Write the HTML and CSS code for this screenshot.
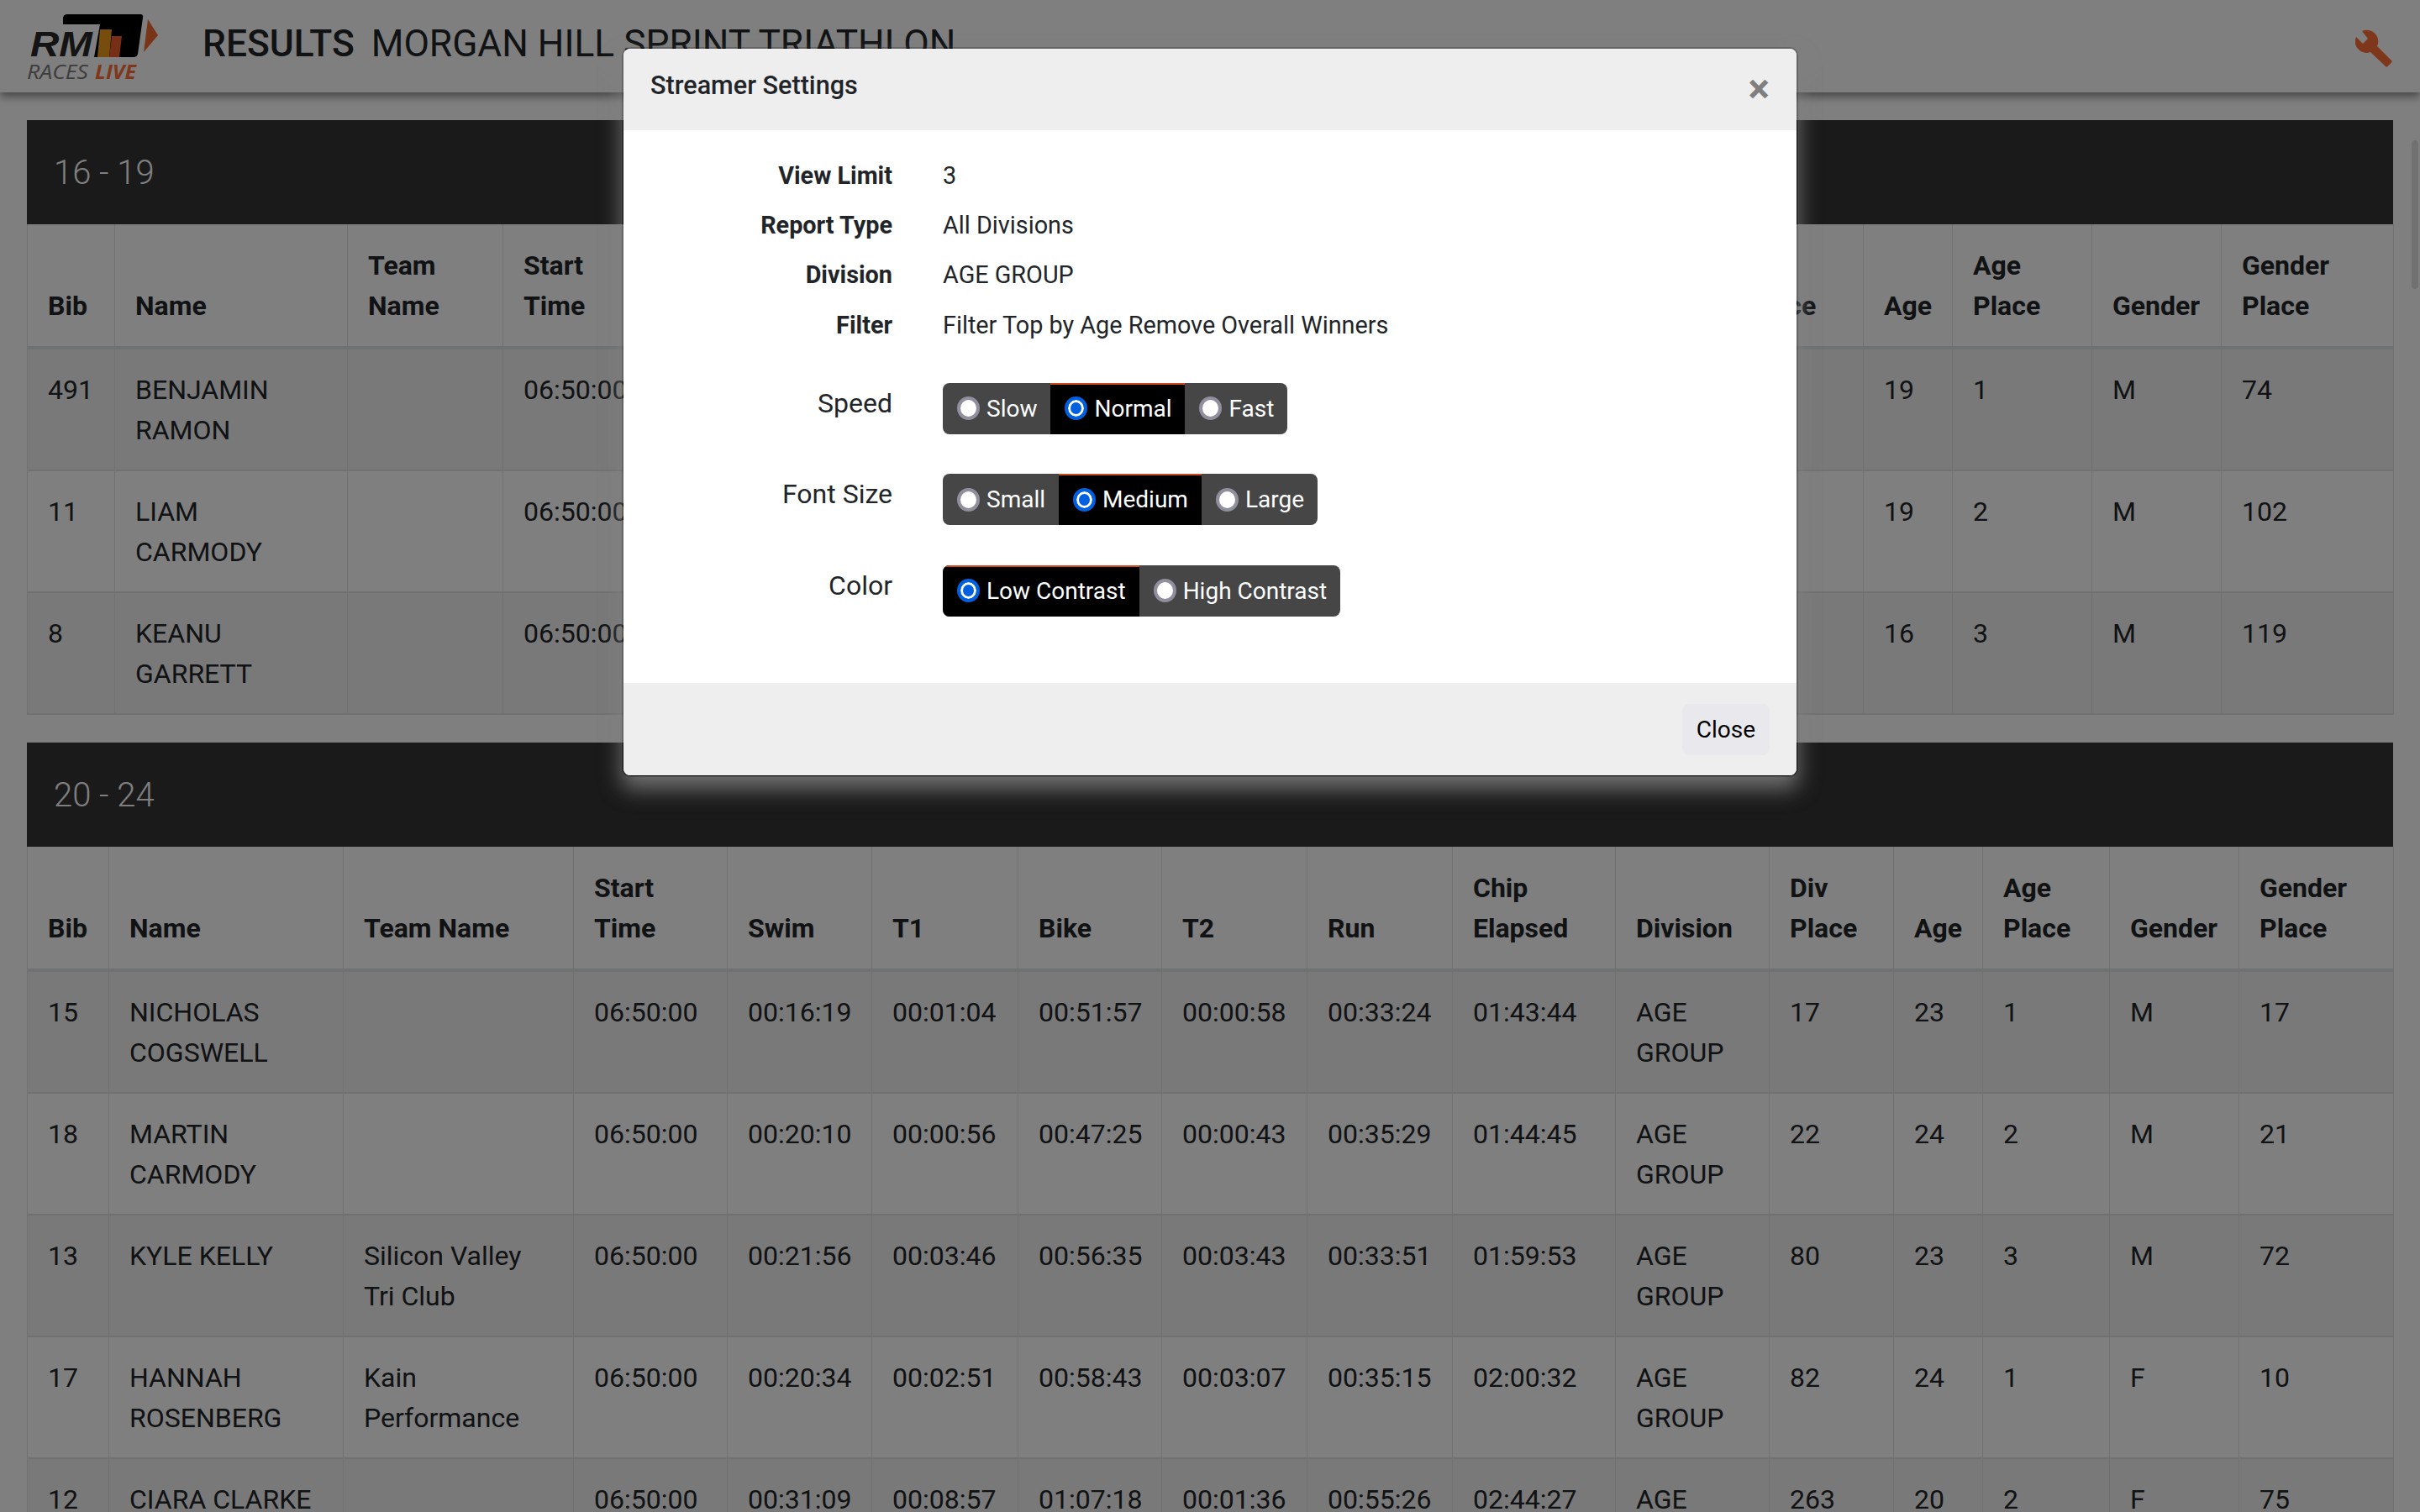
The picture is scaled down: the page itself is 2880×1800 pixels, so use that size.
FILE: index.html
```html
<!DOCTYPE html>
<html lang="en">
<head>
    <meta charset="UTF-8">
    <title>Results - Morgan Hill Sprint Triathlon</title>
    <link rel="stylesheet" href="styles.css">
</head>
<body>
    <header class="topbar">
        <svg class="logo" viewBox="0 0 200 110" width="200" height="110">
            <path d="M75 21Q76 17 80 17H167Q171 17 170 21L164 64Q163 68 159 68H112L119 29H75Z" fill="#000"/>
            <path d="M119 35H133L130 68H116Z" fill="#ee9a1c"/>
            <path d="M133 43H145L142 68H130Z" fill="#ec5f2c"/>
            <path d="M176 23L188 42L171 62Z" fill="#f26a30"/>
            <text class="logo-rm" x="36" y="67" textLength="74" lengthAdjust="spacingAndGlyphs">RM</text>
            <text class="logo-races" x="32" y="94" textLength="73" lengthAdjust="spacingAndGlyphs">RACES</text>
            <text class="logo-live" x="113" y="94" textLength="49" lengthAdjust="spacingAndGlyphs">LIVE</text>
        </svg>
        <h1 class="page-title"><strong>RESULTS</strong> MORGAN HILL SPRINT TRIATHLON</h1>
        <svg class="wrench" viewBox="0 0 46 46" width="46" height="46">
            <path d="M8 2L15 11L9 17L1 9A13.5 13.5 0 0 0 18 27L36 44Q37 45.5 38.5 44L43 39.5Q44 38 43 37L26 20A13.5 13.5 0 0 0 8 2Z"/>
        </svg>
    </header>

    <main class="results">
        <section class="division">
            <h2 class="division-title">16 - 19</h2>
            <table class="results-table first">
                <colgroup>
                    <col><col><col><col><col><col><col><col><col><col><col><col><col><col><col><col>
                </colgroup>
                <thead>
                    <tr>
                        <th>Bib</th><th>Name</th><th>Team Name</th><th>Start Time</th><th>Swim</th><th>T1</th><th>Bike</th><th>T2</th><th>Run</th><th>Chip Elapsed</th><th>Division</th><th>Div Place</th><th>Age</th><th>Age Place</th><th>Gender</th><th>Gender Place</th>
                    </tr>
                </thead>
                <tbody>
                    <tr>
                        <td>491</td><td>BENJAMIN RAMON</td><td></td><td>06:50:00</td><td></td><td></td><td></td><td></td><td></td><td></td><td></td><td></td><td>19</td><td>1</td><td>M</td><td>74</td>
                    </tr>
                    <tr>
                        <td>11</td><td>LIAM<br>CARMODY</td><td></td><td>06:50:00</td><td></td><td></td><td></td><td></td><td></td><td></td><td></td><td></td><td>19</td><td>2</td><td>M</td><td>102</td>
                    </tr>
                    <tr>
                        <td>8</td><td>KEANU<br>GARRETT</td><td></td><td>06:50:00</td><td></td><td></td><td></td><td></td><td></td><td></td><td></td><td></td><td>16</td><td>3</td><td>M</td><td>119</td>
                    </tr>
                </tbody>
            </table>
        </section>

        <section class="division">
            <h2 class="division-title">20 - 24</h2>
            <table class="results-table second">
                <colgroup>
                    <col><col><col><col><col><col><col><col><col><col><col><col><col><col><col><col>
                </colgroup>
                <thead>
                    <tr>
                        <th>Bib</th><th>Name</th><th>Team Name</th><th>Start Time</th><th>Swim</th><th>T1</th><th>Bike</th><th>T2</th><th>Run</th><th>Chip Elapsed</th><th>Division</th><th>Div Place</th><th>Age</th><th>Age Place</th><th>Gender</th><th>Gender Place</th>
                    </tr>
                </thead>
                <tbody>
                    <tr>
                        <td>15</td><td>NICHOLAS COGSWELL</td><td></td><td>06:50:00</td><td>00:16:19</td><td>00:01:04</td><td>00:51:57</td><td>00:00:58</td><td>00:33:24</td><td>01:43:44</td><td>AGE GROUP</td><td>17</td><td>23</td><td>1</td><td>M</td><td>17</td>
                    </tr>
                    <tr>
                        <td>18</td><td>MARTIN CARMODY</td><td></td><td>06:50:00</td><td>00:20:10</td><td>00:00:56</td><td>00:47:25</td><td>00:00:43</td><td>00:35:29</td><td>01:44:45</td><td>AGE GROUP</td><td>22</td><td>24</td><td>2</td><td>M</td><td>21</td>
                    </tr>
                    <tr>
                        <td>13</td><td>KYLE KELLY</td><td>Silicon Valley Tri Club</td><td>06:50:00</td><td>00:21:56</td><td>00:03:46</td><td>00:56:35</td><td>00:03:43</td><td>00:33:51</td><td>01:59:53</td><td>AGE GROUP</td><td>80</td><td>23</td><td>3</td><td>M</td><td>72</td>
                    </tr>
                    <tr>
                        <td>17</td><td>HANNAH ROSENBERG</td><td>Kain Performance</td><td>06:50:00</td><td>00:20:34</td><td>00:02:51</td><td>00:58:43</td><td>00:03:07</td><td>00:35:15</td><td>02:00:32</td><td>AGE GROUP</td><td>82</td><td>24</td><td>1</td><td>F</td><td>10</td>
                    </tr>
                    <tr>
                        <td>12</td><td>CIARA CLARKE</td><td></td><td>06:50:00</td><td>00:31:09</td><td>00:08:57</td><td>01:07:18</td><td>00:01:36</td><td>00:55:26</td><td>02:44:27</td><td>AGE GROUP</td><td>263</td><td>20</td><td>2</td><td>F</td><td>75</td>
                    </tr>
                </tbody>
            </table>
        </section>
    </main>

    <div class="scroll-thumb"></div>
    <div class="backdrop"></div>

    <div class="modal">
        <div class="modal-header">
            <h3 class="modal-title">Streamer Settings</h3>
            <span class="modal-x">&times;</span>
        </div>
        <div class="modal-body">
            <dl class="info">
                <dt>View Limit</dt><dd>3</dd>
                <dt>Report Type</dt><dd>All Divisions</dd>
                <dt>Division</dt><dd>AGE GROUP</dd>
                <dt>Filter</dt><dd>Filter Top by Age Remove Overall Winners</dd>
            </dl>

            <div class="setting">
                <span class="setting-label">Speed</span>
                <div class="segments">
                    <label class="segment"><input type="radio" name="speed">Slow</label>
                    <label class="segment active"><input type="radio" name="speed" checked>Normal</label>
                    <label class="segment"><input type="radio" name="speed">Fast</label>
                </div>
            </div>
            <div class="setting">
                <span class="setting-label">Font Size</span>
                <div class="segments">
                    <label class="segment"><input type="radio" name="size">Small</label>
                    <label class="segment active"><input type="radio" name="size" checked>Medium</label>
                    <label class="segment"><input type="radio" name="size">Large</label>
                </div>
            </div>
            <div class="setting">
                <span class="setting-label">Color</span>
                <div class="segments">
                    <label class="segment active"><input type="radio" name="color" checked>Low Contrast</label>
                    <label class="segment"><input type="radio" name="color">High Contrast</label>
                </div>
            </div>
        </div>
        <div class="modal-footer">
            <button class="close-btn" type="button">Close</button>
        </div>
    </div>
</body>
</html>
```

FILE: styles.css
```css
/* page is 2x of a 1440x900 layout, so everything is doubled */
:root {
    --text-color: #212529;
    --border-color: #dee2e6;
    --accent-color: #ff6e36;
    --bar-color: #343434;
    --segment-color: #464646;
}

html, body {
    margin: 0;
    height: 1800px;
    overflow: hidden;
}
body {
    position: relative;
    background-color: #fff;
    color: var(--text-color);
    font-family: Roboto, "Liberation Sans", sans-serif;
    font-size: 32px;
    line-height: 48px;
}

/* top bar */
.topbar {
    display: flex;
    align-items: center;
    height: 110px;
    padding-right: 31px;
    box-shadow: 0 5px 10px rgba(0, 0, 0, .45);
}
.logo {
    flex: none;
}
.logo-rm {
    font: italic bold 42px "Liberation Sans", sans-serif;
    fill: #282828;
}
.logo-races {
    font: italic 23.5px "Open Sans", sans-serif;
    fill: #7a7a7a;
}
.logo-live {
    font: italic bold 23.5px "Open Sans", sans-serif;
    fill: var(--accent-color);
}
.page-title {
    flex: 1;
    margin: 0 0 6px 41px;
    font-size: 44.3px;
    font-weight: 400;
    line-height: 56px;
    white-space: nowrap;
}
.page-title strong {
    font-weight: 500;
    margin-right: 9px;
}
.wrench {
    flex: none;
    margin-top: 6px;
    fill: var(--accent-color);
}

/* result tables */
.results {
    padding: 33px 32px 0;
}
.division {
    margin-bottom: 33px;
}
.division-title {
    margin: 0;
    height: 124px;
    padding: 0 32px;
    background-color: var(--bar-color);
    color: #fff;
    font-size: 40px;
    font-weight: 300;
    line-height: 126px;
}
.results-table {
    table-layout: fixed;
    width: 2816px;
    border-collapse: separate;
    border-spacing: 0;
    border-left: 1px solid var(--border-color);
}
.results-table th,
.results-table td {
    padding: 24px 24px 23px;
    border-right: 1px solid var(--border-color);
    border-bottom: 2px solid var(--border-color);
    text-align: left;
    vertical-align: top;
}
.results-table th {
    padding-top: 25px;
    padding-bottom: 24px;
    border-bottom-width: 4px;
    font-weight: 700;
    vertical-align: bottom;
}
.results-table tbody tr:nth-child(odd) {
    background-color: rgba(0, 0, 0, .05);
}

.first col:nth-child(1) { width: 104px; }
.first col:nth-child(2) { width: 277px; }
.first col:nth-child(3) { width: 185px; }
.first col:nth-child(4) { width: 184px; }
.first col:nth-child(5) { width: 185px; }
.first col:nth-child(6) { width: 177px; }
.first col:nth-child(7) { width: 185px; }
.first col:nth-child(8) { width: 177px; }
.first col:nth-child(9) { width: 180px; }
.first col:nth-child(10) { width: 184px; }
.first col:nth-child(11) { width: 186px; }
.first col:nth-child(12) { width: 161px; }
.first col:nth-child(13) { width: 106px; }
.first col:nth-child(14) { width: 166px; }
.first col:nth-child(15) { width: 154px; }
.first col:nth-child(16) { width: 205px; }

.second col:nth-child(1) { width: 97px; }
.second col:nth-child(2) { width: 279px; }
.second col:nth-child(3) { width: 274px; }
.second col:nth-child(4) { width: 183px; }
.second col:nth-child(5) { width: 172px; }
.second col:nth-child(6) { width: 174px; }
.second col:nth-child(7) { width: 171px; }
.second col:nth-child(8) { width: 173px; }
.second col:nth-child(9) { width: 173px; }
.second col:nth-child(10) { width: 194px; }
.second col:nth-child(11) { width: 183px; }
.second col:nth-child(12) { width: 148px; }
.second col:nth-child(13) { width: 106px; }
.second col:nth-child(14) { width: 151px; }
.second col:nth-child(15) { width: 154px; }
.second col:nth-child(16) { width: 184px; }

.scroll-thumb {
    position: absolute;
    top: 167px;
    right: 2px;
    width: 8px;
    height: 177px;
    border-radius: 4px;
    background-color: #e2e2e2;
}

/* settings dialog */
.backdrop {
    position: absolute;
    inset: 0;
    background-color: #000;
    opacity: .5;
}
.modal {
    position: absolute;
    top: 56px;
    left: 740px;
    box-sizing: border-box;
    width: 1400px;
    border: 2px solid rgba(0, 0, 0, .2);
    border-radius: 10px;
    background-color: #fff;
    background-clip: padding-box;
    box-shadow: 0 14px 26px rgba(128, 128, 128, .85);
    font-size: 28.8px;
    line-height: 43.2px;
}
.modal-header {
    display: flex;
    justify-content: space-between;
    height: 97px;
    box-sizing: border-box;
    padding: 20px 32px 0;
    background-color: #eee;
    border-radius: 8px 8px 0 0;
}
.modal-title {
    margin: 0;
    font-size: 30.6px;
    font-weight: 500;
    line-height: 48px;
}
.modal-x {
    color: #7f7f7f;
    font-size: 48px;
    font-weight: 700;
    line-height: 48px;
    margin-top: 4px;
}
.modal-body {
    padding: 33px 32px 32px;
}
.info {
    display: grid;
    grid-template-columns: 288px 1fr;
    column-gap: 60px;
    row-gap: 16px;
    margin: 0 0 47px;
}
.info dt {
    font-weight: 700;
    text-align: right;
}
.info dd {
    margin: 0;
}
.setting {
    display: grid;
    grid-template-columns: 288px 1fr;
    column-gap: 60px;
    margin-bottom: 47.5px;
}
.setting-label {
    font-size: 32px;
    line-height: 48px;
    text-align: right;
}
.segments {
    display: flex;
    justify-self: start;
    border-radius: 8px;
    overflow: hidden;
    background-color: var(--segment-color);
    color: #fff;
    font-size: 28px;
}
.segment {
    display: flex;
    align-items: center;
    gap: 8px;
    height: 61px;
    box-sizing: border-box;
    padding: 0 16px 2px 17px;
    border-top: 2px solid transparent;
}
.segment.active {
    background-color: #000;
    border-top-color: #cc4a20;
}
.segment input {
    appearance: none;
    box-sizing: border-box;
    width: 27px;
    height: 28px;
    margin: 0;
    border: 4px solid #8f8f9d;
    border-radius: 50%;
    background-color: #fff;
}
.segment input:checked {
    border-color: #0060df;
    background-color: #0060df;
    box-shadow: inset 0 0 0 3px #fff;
}
.modal-footer {
    display: flex;
    justify-content: flex-end;
    align-items: center;
    height: 110px;
    padding: 0 32px;
    background-color: #eee;
    border-radius: 0 0 8px 8px;
}
.close-btn {
    height: 61px;
    padding: 0 17px;
    border: 0;
    border-radius: 8px;
    background-color: #e9e9ed;
    color: #000;
    font: inherit;
    font-size: 28px;
}
```
